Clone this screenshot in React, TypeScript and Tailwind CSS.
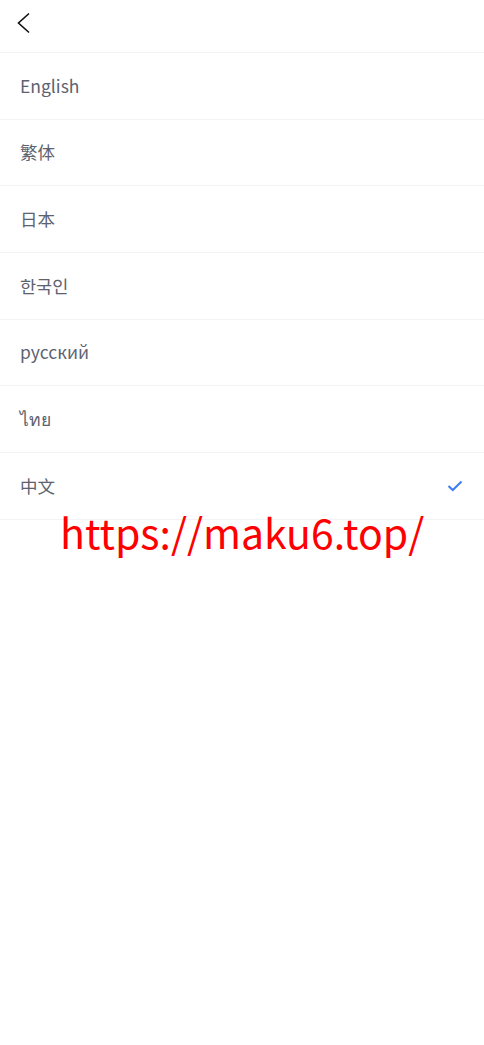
const languages = [
  { label: "English", active: false },
  { label: "繁体", active: false },
  { label: "日本", active: false },
  { label: "한국인", active: false },
  { label: "русский", active: false },
  { label: "ไทย", active: false },
  { label: "中文", active: true },
];

export default function App() {
  return (
    <div
      className="relative min-h-[1045px] w-full bg-white"
      style={{ fontFamily: '"Noto Sans CJK SC", "Noto Sans", sans-serif' }}
    >
      <div className="flex h-[53px] items-start border-b border-[#f2f3f5] px-[16px] pt-[12px]">
        <svg width="16" height="22" viewBox="0 0 16 22" fill="none">
          <path d="M13 1.5 L2.5 11 L13 20.5" stroke="#111" strokeWidth="1.6" strokeLinejoin="miter" />
        </svg>
      </div>
      <ul>
        {languages.map((lang) => (
          <li
            key={lang.label}
            className="flex h-[66.7px] items-center justify-between border-b border-[#f2f3f5] px-[20px] text-[17.5px] text-[#5d6270]"
          >
            <span>{lang.label}</span>
            {lang.active && (
              <svg width="16" height="12" viewBox="0 0 16 12" fill="none" className="mr-[1px]">
                <path d="M1.5 6 L5.8 10 L14.5 1.5" stroke="#3d7cf0" strokeWidth="2" />
              </svg>
            )}
          </li>
        ))}
      </ul>
      <div className="absolute left-[60px] top-[501px] text-[41px] leading-[60px] text-[#ff0000]">
        https://maku6.top/
      </div>
    </div>
  );
}
